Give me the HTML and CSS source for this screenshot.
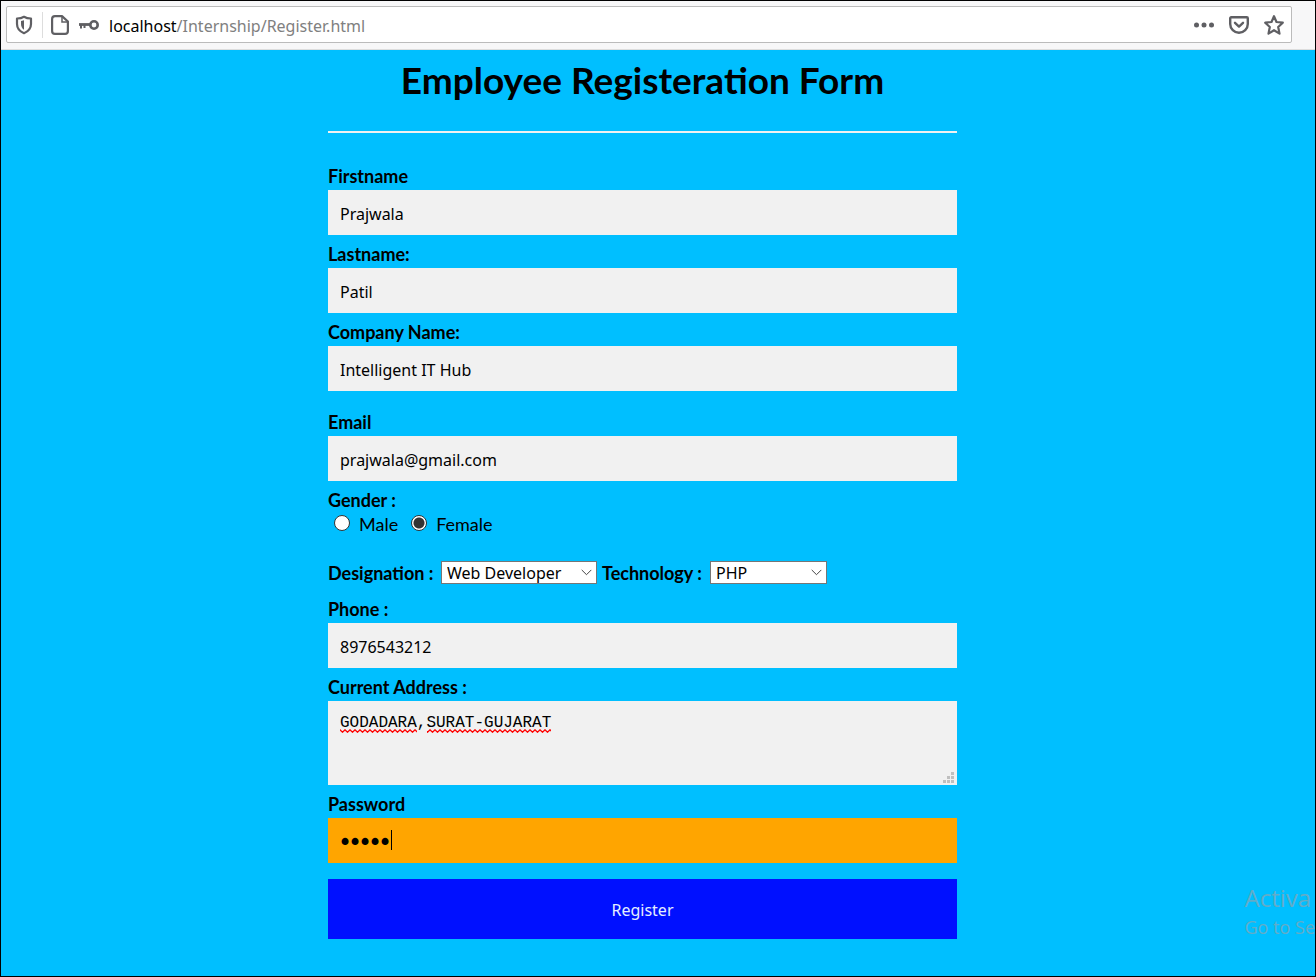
FILE: index.html
```html
<!DOCTYPE html>
<html lang="en">
<head>
<meta charset="utf-8">
<title>Employee Registeration Form</title>
<link rel="stylesheet" href="styles.css">
</head>
<body>
<div class="window">
  <header class="toolbar">
    <div class="urlbar">
      <svg class="icon shield" width="18" height="20" viewBox="0 0 18 20" fill="none" stroke="#5f5f63" stroke-width="2.200"><path d="M9 1.800C11 3 13.500 3.500 16 3.500V9c0 4.200-2.400 7.200-7 9.200C4.400 16.200 2 13.200 2 9V3.500C4.500 3.500 7 3 9 1.800Z" stroke-linejoin="round"/><path d="M9 5.200v9.600C7 13.400 6 11.500 6 9V6Z" fill="#5f5f63" stroke="none"/></svg>
      <span class="divider"></span>
      <svg class="icon" width="18" height="20" viewBox="0 0 18 20" fill="none" stroke="#5f5f63" stroke-width="2.200"><path d="M11 1.100H4a3 3 0 0 0-2.900 3v11.800a3 3 0 0 0 2.900 3h10a3 3 0 0 0 2.900-3V6.500Z" stroke-linejoin="round"/><path d="M11 1.500V7h5.500" stroke-width="1.500"/></svg>
      <svg class="icon key" width="20" height="12" viewBox="0 0 20 12" fill="none" stroke="#5f5f63"><circle cx="15" cy="6" r="3.700" stroke-width="2.600"/><path d="M0 5.500h11" stroke-width="2.800"/><path d="M2 6v3.500M5.500 6v3" stroke-width="2"/></svg>
      <span class="address">localhost<span class="path">/Internship/Register.html</span></span>
      <div class="actions">
        <svg width="20" height="20" viewBox="0 0 20 20" fill="#5f5f63"><circle cx="2.500" cy="10" r="2.500"/><circle cx="10" cy="10" r="2.500"/><circle cx="17.500" cy="10" r="2.500"/></svg>
        <svg width="20" height="20" viewBox="0 0 20 20" fill="none" stroke="#5f5f63" stroke-width="2.400" stroke-linecap="round" stroke-linejoin="round"><path d="M2.200 2.200h15.600a1 1 0 0 1 1 1V9a8.800 8.800 0 0 1-17.600 0V3.200a1 1 0 0 1 1-1Z"/><path d="M6 7.800l4 3.800 4-3.800"/></svg>
        <svg width="20" height="20" viewBox="0 0 20 20" fill="none" stroke="#5f5f63" stroke-width="2.200" stroke-linejoin="round"><path d="M10 1.200l2.500 5.800 6.300.7-4.600 4.300 1.300 6.600-5.500-3.400-5.500 3.400 1.300-6.600L1.200 7.700l6.300-.7Z"/></svg>
      </div>
    </div>
  </header>
  <main class="page">
    <form class="form">
      <h1>Employee Registeration Form</h1>
      <hr>
      <div class="field">
        <label for="first">Firstname</label>
        <input class="text" id="first" type="text" value="Prajwala">
      </div>
      <div class="field">
        <label for="last">Lastname:</label>
        <input class="text" id="last" type="text" value="Patil">
      </div>
      <div class="field">
        <label for="company">Company Name:</label>
        <input class="text" id="company" type="text" value="Intelligent IT Hub">
      </div>
      <div class="field spaced">
        <label for="email">Email</label>
        <input class="text" id="email" type="text" value="prajwala@gmail.com">
      </div>
      <fieldset class="field gender">
        <legend>Gender :</legend>
        <div class="radios">
          <input type="radio" name="gender" id="male"><label for="male">Male</label>
          <input type="radio" name="gender" id="female" checked><label for="female">Female</label>
        </div>
      </fieldset>
      <div class="selects">
        <label for="designation">Designation :</label>
        <span class="select wide">
          <select id="designation"><option>Web Developer</option></select>
          <svg width="11" height="7" viewBox="0 0 11 7" fill="none" stroke="#444"><path d="M.7.900 5.500 5.700 10.300.900"/></svg>
        </span>
        <label for="technology">Technology :</label>
        <span class="select">
          <select id="technology"><option>PHP</option></select>
          <svg width="11" height="7" viewBox="0 0 11 7" fill="none" stroke="#444"><path d="M.7.900 5.500 5.700 10.300.900"/></svg>
        </span>
      </div>
      <div class="field">
        <label for="phone">Phone :</label>
        <input class="text" id="phone" type="text" value="8976543212">
      </div>
      <div class="field">
        <label for="addr">Current Address :</label>
        <div class="control">
          <textarea class="text" id="addr" spellcheck="false">GODADARA,SURAT-GUJARAT</textarea>
          <svg class="squiggle" width="216" height="4" fill="none" stroke="#f00">
            <defs><pattern id="wave" width="5" height="4" patternUnits="userSpaceOnUse"><path d="M-1 1.800 0 .8 2.500 3.200 5 .8 6 1.800" stroke-width="1.300"/></pattern></defs>
            <rect width="77" height="4" fill="url(#wave)" stroke="none"/><rect x="87" width="124" height="4" fill="url(#wave)" stroke="none"/>
          </svg>
          <svg class="grip" width="11" height="11" fill="#bfbfbf"><path d="M8 0h3v3H8zM4 4h3v3H4zM8 4h3v3H8zM0 8h3v3H0zM4 8h3v3H4zM8 8h3v3H8z"/></svg>
        </div>
      </div>
      <div class="field">
        <label for="pass">Password</label>
        <div class="control">
          <input class="text active" id="pass" type="password" value="12345">
          <span class="caret"></span>
        </div>
      </div>
      <button class="register" type="button">Register</button>
    </form>
  </main>
  <div class="watermark"><p class="big">Activa</p><p>Go to Se</p></div>
</div>
</body>
</html>
```
FILE: styles.css
```css
* { box-sizing: border-box; }
body { margin: 0; font-family: Lato, "Open Sans", sans-serif; color: #000; }
.window {
  position: relative;
  display: flex;
  flex-direction: column;
  min-height: 100vh;
  border: 1px solid #000;
  background: #00bfff;
}
.toolbar { padding: 5px 23px 6px 5px; background: #f7f7f8; border-bottom: 1px solid #ddd; }
.urlbar {
  display: flex;
  align-items: center;
  height: 37px;
  padding: 0 7px 0 8px;
  border: 1px solid #bbb;
  border-radius: 2px;
  background: #fff;
}
.icon { flex: none; }
.divider { width: 1px; height: 26px; margin: 0 8px 0 9px; background: #ddd; }
.key { margin: 0 10px; }
.address { padding-top: 2px; font: 16px "Noto Sans", sans-serif; white-space: nowrap; }
.path { color: #808080; }
.actions { display: flex; gap: 15px; margin-left: auto; }

.page { display: grid; grid-template-columns: 327fr 629fr 358fr; }
.form { grid-column: 2; padding-bottom: 36px; }
h1 { margin: 7px 0 28px; font-size: 37px; line-height: 46px; text-align: center; }
hr { margin: 0 0 34px; border: 0; border-top: 2px solid #f1f1f1; }
.field { margin: 0 0 10px; padding: 0; border: 0; }
.field > label, legend, .selects label {
  display: block;
  padding: 0;
  font-size: 18px;
  font-weight: bold;
  line-height: 18px;
}
.field > label { height: 23px; }
.spaced { margin-top: 22px; }
.text {
  display: block;
  width: 100%;
  height: 45px;
  margin: 0;
  padding: 3px 12px 0;
  border: 0;
  border-radius: 0;
  outline: 0;
  background: #f1f1f1;
  color: #000;
  font: 16px "Noto Sans", sans-serif;
}
textarea.text {
  height: 84px;
  padding: 13px 12px;
  resize: none;
  font: 16px/18px "Liberation Mono", monospace;
}
.text.active {
  background: #ffa500;
  font: 17px "DejaVu Sans", sans-serif;
  -webkit-text-stroke: 2px #000;
}
.control { position: relative; }
.squiggle { position: absolute; left: 12px; top: 28px; }
.grip { position: absolute; right: 3px; bottom: 2px; }
.caret { position: absolute; left: 63px; top: 12px; width: 1px; height: 20px; background: #000; }

.gender { margin-bottom: 24px; }
.radios { display: flex; align-items: center; height: 28px; padding-left: 6px; font-size: 18px; }
.radios input {
  appearance: none;
  width: 16px;
  height: 16px;
  margin: 0 9px 0 0;
  border: 1px solid #333;
  border-radius: 50%;
  background: #fff;
}
.radios input:checked { background: radial-gradient(circle, #333 5px, #fff 6px); }
.radios label { margin-right: 13px; padding-top: 2px; }
.selects { display: flex; align-items: center; gap: 5px; margin-bottom: 16px; white-space: nowrap; }
.selects label { min-width: 103px; }
.selects label:first-child { min-width: 108px; }
.select { position: relative; width: 117px; }
.select.wide { width: 156px; }
.select select {
  appearance: none;
  display: block;
  width: 100%;
  height: 23px;
  padding: 0 5px;
  border: 1px solid #767676;
  border-radius: 0;
  background: #fff;
  color: #000;
  font: 16px/20px "Noto Sans", sans-serif;
}
.select svg { position: absolute; right: 5px; top: 8px; pointer-events: none; }
.register {
  display: block;
  width: 100%;
  height: 60px;
  margin-top: 16px;
  padding: 2px 0 0;
  border: 0;
  background: #0010ff;
  color: #e5eeff;
  font: 16px "Noto Sans", sans-serif;
}
.watermark {
  position: absolute;
  right: 0;
  bottom: 37px;
  white-space: nowrap;
  color: #62acc8;
  font: 18px/24px "Open Sans", sans-serif;
}
.watermark p { margin: 0; }
.watermark .big { font-size: 24px; line-height: 34px; }
```
